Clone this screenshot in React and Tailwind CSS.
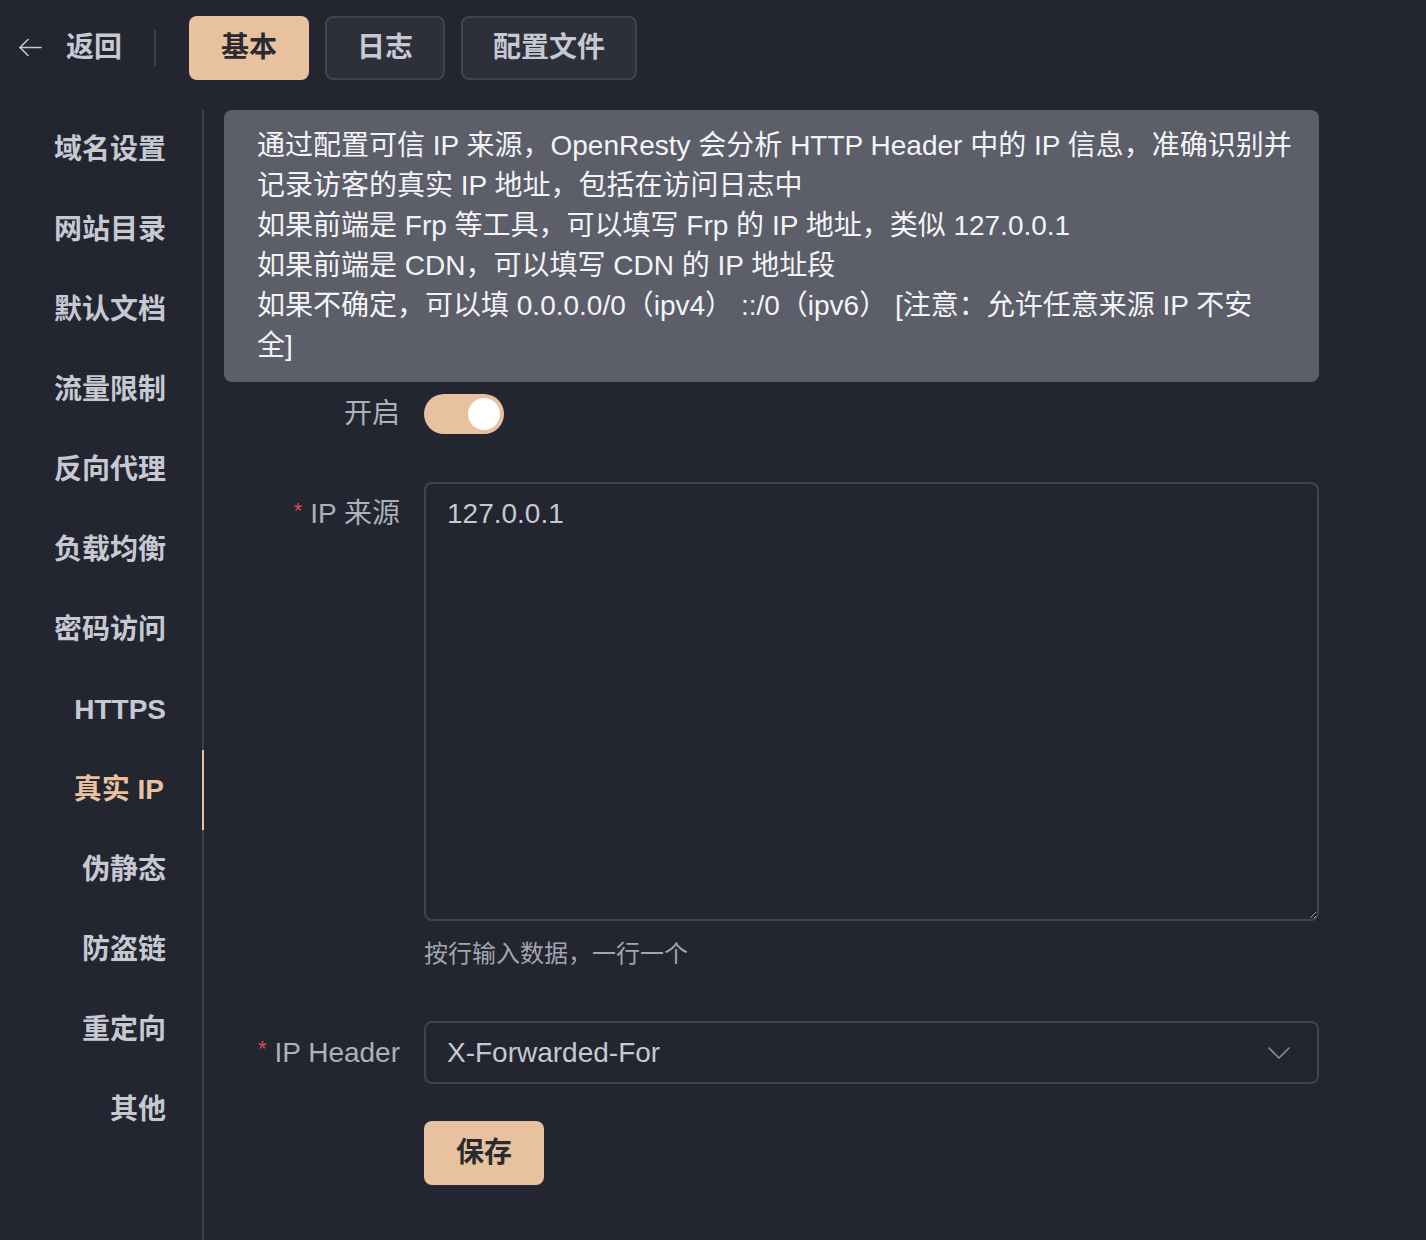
import React from 'react';

const FONT = { fontFamily: '"Liberation Sans", "Noto Sans CJK SC", sans-serif' };

const menu = ['域名设置', '网站目录', '默认文档', '流量限制', '反向代理', '负载均衡', '密码访问', 'HTTPS', '真实 IP', '伪静态', '防盗链', '重定向', '其他'];

const tipLines = [
  '通过配置可信 IP 来源，OpenResty 会分析 HTTP Header 中的 IP 信息，准确识别并',
  '记录访客的真实 IP 地址，包括在访问日志中',
  '如果前端是 Frp 等工具，可以填写 Frp 的 IP 地址，类似 127.0.0.1',
  '如果前端是 CDN，可以填写 CDN 的 IP 地址段',
  '如果不确定，可以填 0.0.0.0/0（ipv4） ::/0（ipv6） [注意：允许任意来源 IP 不安',
  '全]',
];

const App = () => {
  return (
    <div className="w-full min-h-[1240px] bg-[#232530] text-[#c6c8d2]" style={FONT}>
      {/* top bar */}
      <div className="flex items-center h-[96px]">
        <div className="flex items-center pl-[18px]">
          <svg width="24" height="24" viewBox="0 0 24 24" fill="none" stroke="#c6c8d2" strokeWidth="1.6" strokeLinecap="round" strokeLinejoin="round">
            <path d="M23 11.5H2" />
            <path d="M10 3.5l-8 8 8 8" />
          </svg>
          <span className="ml-[24px] text-[28px] font-bold text-[#c6c8d2]">返回</span>
        </div>
        <div className="ml-[32px] w-[2px] h-[36px] bg-[#3d404b]" />
        <div className="ml-[33px] flex items-center gap-[16px]">
          <button className="w-[120px] h-[64px] rounded-[8px] bg-[#e8c29e] text-[28px] font-bold text-[#2a2b30]">基本</button>
          <button className="w-[120px] h-[64px] rounded-[8px] bg-[#2d2f3a] border-2 border-[#41434e] text-[28px] font-bold text-[#c6c8d2]">日志</button>
          <button className="w-[176px] h-[64px] rounded-[8px] bg-[#2d2f3a] border-2 border-[#41434e] text-[28px] font-bold text-[#c6c8d2]">配置文件</button>
        </div>
      </div>

      <div className="flex mt-[14px]">
        {/* sidebar */}
        <div className="w-[204px] shrink-0 border-r-2 border-[#3d404b] min-h-[1130px]">
          {menu.map((m) => {
            const active = m === '真实 IP';
            return (
              <div
                key={m}
                className={
                  'h-[80px] flex items-center justify-end pr-[38px] text-[28px] font-bold -mr-[2px] ' +
                  (active ? 'text-[#e8c29e] border-r-2 border-[#e8c29e]' : 'text-[#c6c8d2]')
                }
              >
                {m}
              </div>
            );
          })}
        </div>

        {/* content */}
        <div className="ml-[20px] w-[1095px]">
          <div className="bg-[#5c5e6a] rounded-[8px] pl-[33px] pr-[12px] py-[16px] text-[28px] leading-[40px] text-[#f4f4f6]">
            {tipLines.map((l, i) => (
              <div key={i} className="whitespace-nowrap">{l}</div>
            ))}
          </div>

          <div className="mt-[12px] flex items-center h-[40px]">
            <div className="w-[176px] text-right text-[28px] text-[#aeb0bb]">开启</div>
            <div className="ml-[24px] w-[80px] h-[40px] rounded-full bg-[#e8c29e] flex items-center justify-end pr-[4px]">
              <div className="w-[32px] h-[32px] rounded-full bg-white" />
            </div>
          </div>

          <div className="mt-[48px] flex">
            <div className="w-[176px] h-[64px] flex items-center justify-end text-[28px] text-[#aeb0bb]">
              <span className="text-[#e0465a] text-[22px] mr-[8px] -mt-[8px]">*</span>IP 来源
            </div>
            <div className="ml-[24px] flex-1">
              <textarea
                className="block w-full h-[439px] bg-transparent border-2 border-[#41434e] rounded-[8px] px-[21px] py-[12px] text-[28px] leading-[36px] text-[#c6c8d2] outline-none resize-y"
                style={FONT}
                defaultValue="127.0.0.1"
              />
              <div className="mt-[16px] text-[24px] leading-[34px] text-[#a2a4af]">按行输入数据，一行一个</div>
            </div>
          </div>

          <div className="mt-[50px] flex items-center">
            <div className="w-[176px] text-right text-[28px] text-[#aeb0bb] flex items-center justify-end">
              <span className="text-[#e0465a] text-[22px] mr-[8px] -mt-[8px]">*</span>IP Header
            </div>
            <div className="ml-[24px] flex-1 h-[63px] border-2 border-[#41434e] rounded-[8px] flex items-center justify-between pl-[21px] pr-[26px]">
              <span className="text-[28px] text-[#c6c8d2]">X-Forwarded-For</span>
              <svg width="24" height="14" viewBox="0 0 24 14" fill="none" stroke="#8a8c97" strokeWidth="1.6" strokeLinecap="round" strokeLinejoin="round">
                <path d="M2 2l10 10 10-10" />
              </svg>
            </div>
          </div>

          <div className="mt-[37px] ml-[200px]">
            <button className="w-[120px] h-[64px] rounded-[8px] bg-[#e8c29e] text-[28px] font-bold text-[#2a2b30]">保存</button>
          </div>
        </div>
      </div>
    </div>
  );
};

export default App;
